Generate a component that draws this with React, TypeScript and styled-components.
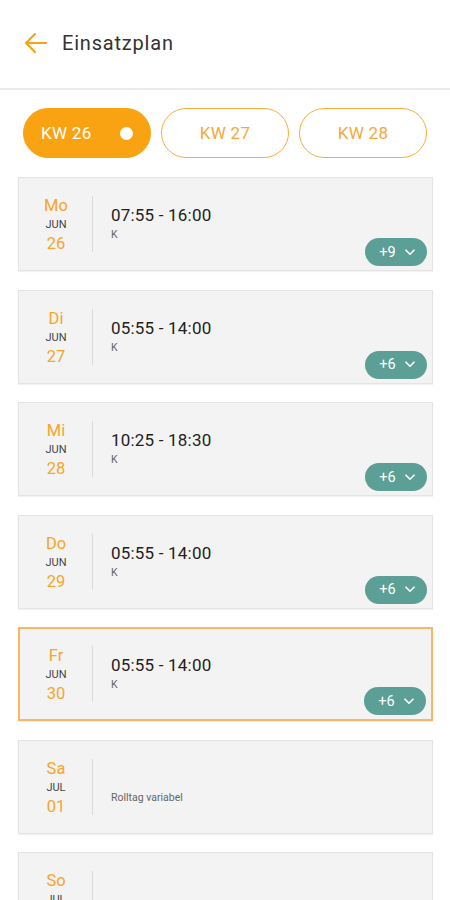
import React from "react";
import styled, { createGlobalStyle } from "styled-components";

const ORANGE = "#f9a312";
const TEAL = "#5c9f97";

const Global = createGlobalStyle`
  html, body { margin: 0; padding: 0; background: #ffffff; }
  body { font-family: Roboto, "Noto Sans", Arial, sans-serif; -webkit-font-smoothing: antialiased; }
  * { box-sizing: border-box; }
`;

const Page = styled.div`
  width: 450px;
  height: 900px;
  overflow: hidden;
  background: #fff;
  display: flex;
  flex-direction: column;
`;

const Header = styled.header`
  height: 90px;
  flex: 0 0 auto;
  display: flex;
  align-items: center;
  gap: 13px;
  padding: 0 0 2px 23px;
  border-bottom: 2px solid #ebebeb;
`;

const BackButton = styled.button`
  width: 26px;
  height: 26px;
  padding: 0;
  border: 0;
  background: none;
  display: flex;
  align-items: center;
  justify-content: center;
  color: ${ORANGE};
`;

const Title = styled.h1`
  margin: 0;
  font-size: 20px;
  font-weight: 400;
  color: #333;
  letter-spacing: 0.8px;
`;

const Content = styled.main`
  display: flex;
  flex-direction: column;
  padding: 18px 17px 0 18px;
`;

const WeekRow = styled.div`
  display: grid;
  grid-template-columns: repeat(3, 128px);
  gap: 10px;
  padding: 0 6px 0 5px;
  margin-bottom: 19px;
`;

const WeekPill = styled.button<{ $active?: boolean }>`
  height: 50px;
  border-radius: 25px;
  border: 1.5px solid ${(p) => (p.$active ? ORANGE : "#f8ac3c")};
  background: ${(p) => (p.$active ? ORANGE : "#fff")};
  color: ${(p) => (p.$active ? "#fff" : "#f7a83a")};
  font-family: Roboto, Arial, sans-serif;
  font-size: 17px;
  letter-spacing: 0.3px;
  display: flex;
  align-items: center;
  justify-content: ${(p) => (p.$active ? "space-between" : "center")};
  padding: ${(p) => (p.$active ? "0 17px 0 17px" : "0")};
`;

const Dot = styled.span`
  width: 13px;
  height: 13px;
  border-radius: 50%;
  background: #fff;
`;

const List = styled.div`
  display: flex;
  flex-direction: column;
  gap: 18.5px;
`;

const Card = styled.div<{ $selected?: boolean }>`
  position: relative;
  height: 94px;
  flex: 0 0 auto;
  background: #f3f3f3;
  border: ${(p) => (p.$selected ? `2px solid #f9b766` : "1px solid #e4e4e4")};
  box-shadow: 0 1px 1px rgba(0, 0, 0, 0.05);
  display: flex;
  align-items: flex-start;
  padding: ${(p) => (p.$selected ? "17px 0" : "18px 0")};
  padding-left: ${(p) => (p.$selected ? "0" : "1px")};
`;

const DateCol = styled.div`
  width: 72px;
  display: flex;
  flex-direction: column;
  align-items: center;
  padding-top: 0px;
`;

const Weekday = styled.span`
  font-size: 16.5px;
  line-height: 20px;
  color: #f7a52a;
`;

const Month = styled.span`
  font-size: 11px;
  line-height: 18px;
  color: #444;
`;

const DayNum = styled.span`
  font-size: 16.5px;
  line-height: 20px;
  color: #f7a52a;
`;

const Divider = styled.div`
  width: 1px;
  align-self: stretch;
  background: #d9d9d9;
`;

const Info = styled.div`
  display: flex;
  flex-direction: column;
  padding: 9px 0 0 18px;
`;

const Time = styled.span`
  font-size: 17px;
  line-height: 20px;
  min-height: 20px;
  color: #222;
  letter-spacing: 0.2px;
`;

const Sub = styled.span`
  font-size: 10.5px;
  line-height: 14px;
  margin-top: 3px;
  color: #666;
`;

const Badge = styled.div`
  position: absolute;
  right: 5px;
  bottom: 4px;
  width: 62px;
  height: 28px;
  border-radius: 14px;
  background: ${TEAL};
  color: #fff;
  font-size: 14.5px;
  display: flex;
  align-items: center;
  justify-content: center;
  gap: 9px;
  padding-left: 2px;
`;

type Day = {
  wd: string;
  mon: string;
  num: string;
  time?: string;
  sub: string;
  more?: number;
  selected?: boolean;
};

const days: Day[] = [
  { wd: "Mo", mon: "JUN", num: "26", time: "07:55 - 16:00", sub: "K", more: 9 },
  { wd: "Di", mon: "JUN", num: "27", time: "05:55 - 14:00", sub: "K", more: 6 },
  { wd: "Mi", mon: "JUN", num: "28", time: "10:25 - 18:30", sub: "K", more: 6 },
  { wd: "Do", mon: "JUN", num: "29", time: "05:55 - 14:00", sub: "K", more: 6 },
  { wd: "Fr", mon: "JUN", num: "30", time: "05:55 - 14:00", sub: "K", more: 6, selected: true },
  { wd: "Sa", mon: "JUL", num: "01", sub: "Rolltag variabel" },
  { wd: "So", mon: "JUL", num: "02", sub: "" },
];

const Chevron = () => (
  <svg width="10" height="7" viewBox="0 0 10 7" fill="none">
    <path d="M1 1.2 L5 5.2 L9 1.2" stroke="#fff" strokeWidth="1.6" strokeLinecap="round" strokeLinejoin="round" />
  </svg>
);

export default function App() {
  return (
    <Page>
      <Global />
      <Header>
        <BackButton aria-label="Zurück">
          <svg width="24" height="24" viewBox="0 0 24 24" fill="none">
            <path d="M22 12 H2.5 M11 3 L2 12 L11 21" stroke={ORANGE} strokeWidth="2.2" strokeLinecap="round" strokeLinejoin="round" />
          </svg>
        </BackButton>
        <Title>Einsatzplan</Title>
      </Header>
      <Content>
        <WeekRow>
          <WeekPill $active>
            <span>KW 26</span>
            <Dot />
          </WeekPill>
          <WeekPill>KW 27</WeekPill>
          <WeekPill>KW 28</WeekPill>
        </WeekRow>
        <List>
          {days.map((d) => (
            <Card key={d.num} $selected={d.selected}>
              <DateCol>
                <Weekday>{d.wd}</Weekday>
                <Month>{d.mon}</Month>
                <DayNum>{d.num}</DayNum>
              </DateCol>
              <Divider />
              <Info>
                <Time>{d.time ?? ""}</Time>
                <Sub>{d.sub}</Sub>
              </Info>
              {d.more !== undefined && (
                <Badge>
                  <span>+{d.more}</span>
                  <Chevron />
                </Badge>
              )}
            </Card>
          ))}
        </List>
      </Content>
    </Page>
  );
}
